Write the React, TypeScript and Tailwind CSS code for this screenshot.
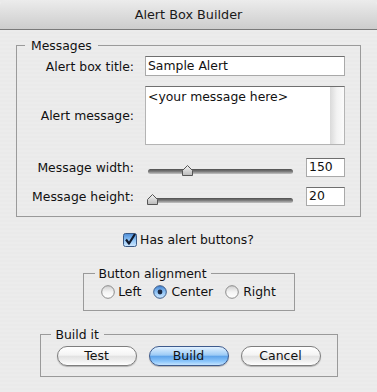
import React from "react";

const font = { fontFamily: '"DejaVu Sans", "Liberation Sans", sans-serif' };

function Thumb() {
  return (
    <svg width="11" height="11" viewBox="0 0 11 11">
      <defs>
        <linearGradient id="tg" x1="0" y1="0" x2="0" y2="1">
          <stop offset="0" stopColor="#f4f4f4" />
          <stop offset="1" stopColor="#b9b9b9" />
        </linearGradient>
      </defs>
      <path d="M0.5 10.5 L0.5 5.5 L5.5 0.5 L10.5 5.5 L10.5 10.5 Z" fill="url(#tg)" stroke="#555" strokeWidth="1" />
    </svg>
  );
}

function Slider({ left }: { left: number }) {
  return (
    <div className="relative w-[148px] h-[20px]">
      <div className="absolute left-[3px] right-0 top-[12px] h-[5px] rounded-full bg-gradient-to-b from-[#4f4f4f] via-[#7d7d7d] to-[#c4c4c4]" />
      <div className="absolute top-[8px]" style={{ left }}>
        <Thumb />
      </div>
    </div>
  );
}

function Radio({ on }: { on?: boolean }) {
  return (
    <svg width="14" height="14" viewBox="0 0 14 14">
      <defs>
        <linearGradient id="rw" x1="0" y1="0" x2="0" y2="1">
          <stop offset="0" stopColor="#cfcfcf" />
          <stop offset="0.5" stopColor="#f4f4f4" />
          <stop offset="1" stopColor="#ffffff" />
        </linearGradient>
        <linearGradient id="rb" x1="0" y1="0" x2="0" y2="1">
          <stop offset="0" stopColor="#3f7fcf" />
          <stop offset="0.5" stopColor="#8ec3f5" />
          <stop offset="1" stopColor="#cfe8ff" />
        </linearGradient>
      </defs>
      <circle cx="7" cy="7" r="6.3" fill={on ? "url(#rb)" : "url(#rw)"} stroke={on ? "#3b5a86" : "#8a8a8a"} strokeWidth="1" />
      {on && <circle cx="7" cy="7" r="2.4" fill="#1c2a44" />}
    </svg>
  );
}

function Check() {
  return (
    <svg width="14" height="14" viewBox="0 0 14 14">
      <defs>
        <linearGradient id="cb" x1="0" y1="0" x2="0" y2="1">
          <stop offset="0" stopColor="#4b8bd6" />
          <stop offset="0.5" stopColor="#8ec3f5" />
          <stop offset="1" stopColor="#cfe8ff" />
        </linearGradient>
      </defs>
      <rect x="0.5" y="0.5" width="13" height="13" rx="2" fill="url(#cb)" stroke="#3b5a86" />
      <path d="M3 6.5 L6 10.5 L12 1" fill="none" stroke="#111a2e" strokeWidth="2.2" strokeLinejoin="round" />
    </svg>
  );
}

function Button({ label, primary }: { label: string; primary?: boolean }) {
  return (
    <div
      className={
        "w-[80px] h-[20px] rounded-full border flex items-center justify-center text-[12.5px] leading-none text-[#111] shadow-[0_1px_1px_rgba(0,0,0,0.25)] " +
        (primary
          ? "border-[#3d5a8c] bg-[linear-gradient(180deg,#e2f1ff_0%,#9ccbf6_45%,#5fa4ea_52%,#8cc6fb_80%,#c4e4ff_100%)]"
          : "border-[#7e7e7e] bg-[linear-gradient(180deg,#ffffff_0%,#f4f4f4_45%,#e2e2e2_52%,#f1f1f1_80%,#ffffff_100%)]")
      }
    >
      {label}
    </div>
  );
}

export default function App() {
  return (
    <div className="w-[377px] h-[392px] bg-white" style={font}>
      <div className="w-full h-full flex flex-col bg-[repeating-linear-gradient(0deg,#ececec_0px,#ececec_2px,#eaeaea_2px,#eaeaea_4px)] text-[12.4px] text-[#111]">
        <div className="h-[30px] shrink-0 rounded-t-[6px] border-b border-[#7a7a7a] bg-gradient-to-b from-[#ececec] to-[#cdcdcd] flex items-center justify-center text-[12.8px] text-[#1a1a1a]">
          Alert Box Builder
        </div>

        <fieldset className="mx-[16px] mt-[8px] border border-[#9a9a9a] pt-[3px] pb-[10px]">
          <legend className="ml-[8px] px-[6px] leading-[15px]">Messages</legend>
          <div className="grid grid-cols-[117px_200px] gap-x-[11px] items-center">
            <div className="text-right leading-[15px]">Alert box title:</div>
            <div className="h-[20px] bg-white border border-[#a9a9a9] border-t-[#6f6f6f] flex items-center pl-[2px] leading-none">Sample Alert</div>

            <div className="text-right leading-[15px] mt-[10px]">Alert message:</div>
            <div className="h-[59px] mt-[10px] border border-[#b4b4b4] border-t-[#6f6f6f] flex">
              <div className="flex-1 bg-white pl-[2px] pt-[2px] leading-[15px]">&lt;your message here&gt;</div>
              <div className="w-[14px] bg-gradient-to-r from-[#dadada] via-[#f3f3f3] to-[#fbfbfb]" />
            </div>

            <div className="text-right leading-[15px] mt-[12px]">Message width:</div>
            <div className="mt-[12px] flex items-center gap-[13px]">
              <Slider left={37} />
              <div className="w-[39px] h-[19px] bg-white border border-[#a9a9a9] border-t-[#6f6f6f] flex items-center pl-[2px] leading-none">150</div>
            </div>

            <div className="text-right leading-[15px] mt-[9px]">Message height:</div>
            <div className="mt-[9px] flex items-center gap-[13px]">
              <Slider left={2} />
              <div className="w-[39px] h-[19px] bg-white border border-[#a9a9a9] border-t-[#6f6f6f] flex items-center pl-[2px] leading-none">20</div>
            </div>
          </div>
        </fieldset>

        <div className="mt-[15px] flex items-center justify-center gap-[3px] leading-[15px]">
          <Check />
          <span>Has alert buttons?</span>
        </div>

        <fieldset className="mx-auto w-[212px] mt-[19px] border border-[#9a9a9a] pt-[4px] pb-[11px]">
          <legend className="ml-[11px] px-[4px] leading-[15px]">Button alignment</legend>
          <div className="flex items-center justify-center gap-[12px] leading-[14px]">
            <div className="flex items-center gap-[3px]"><Radio /><span>Left</span></div>
            <div className="flex items-center gap-[4px]"><Radio on /><span>Center</span></div>
            <div className="flex items-center gap-[4px]"><Radio /><span>Right</span></div>
          </div>
        </fieldset>

        <fieldset className="mx-auto w-[298px] mt-[16px] border border-[#9a9a9a] pt-[4px] pb-[10px]">
          <legend className="ml-[10px] px-[5px] leading-[15px]">Build it</legend>
          <div className="flex items-center justify-center gap-[12px]">
            <Button label="Test" />
            <Button label="Build" primary />
            <Button label="Cancel" />
          </div>
        </fieldset>
      </div>
    </div>
  );
}
